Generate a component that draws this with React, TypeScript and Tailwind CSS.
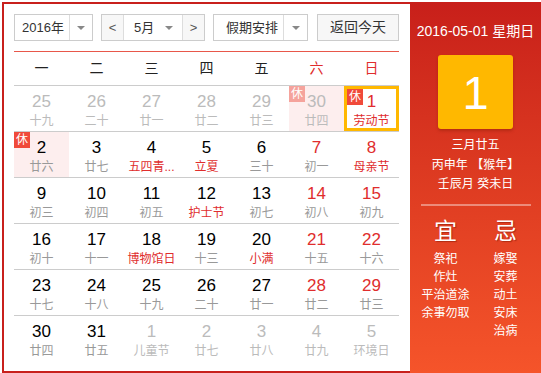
import React from 'react'

type Day = {
  n: number
  sub: string
  other?: boolean
  weekend?: boolean
  fest?: boolean
  rest?: boolean
  today?: boolean
}

const weeks: Day[][] = [
  [
    { n: 25, sub: '十九', other: true },
    { n: 26, sub: '二十', other: true },
    { n: 27, sub: '廿一', other: true },
    { n: 28, sub: '廿二', other: true },
    { n: 29, sub: '廿三', other: true },
    { n: 30, sub: '廿四', other: true, rest: true },
    { n: 1, sub: '劳动节', weekend: true, fest: true, rest: true, today: true },
  ],
  [
    { n: 2, sub: '廿六', rest: true },
    { n: 3, sub: '廿七' },
    { n: 4, sub: '五四青...', fest: true },
    { n: 5, sub: '立夏', fest: true },
    { n: 6, sub: '三十' },
    { n: 7, sub: '初一', weekend: true },
    { n: 8, sub: '母亲节', weekend: true, fest: true },
  ],
  [
    { n: 9, sub: '初三' },
    { n: 10, sub: '初四' },
    { n: 11, sub: '初五' },
    { n: 12, sub: '护士节', fest: true },
    { n: 13, sub: '初七' },
    { n: 14, sub: '初八', weekend: true },
    { n: 15, sub: '初九', weekend: true },
  ],
  [
    { n: 16, sub: '初十' },
    { n: 17, sub: '十一' },
    { n: 18, sub: '博物馆日', fest: true },
    { n: 19, sub: '十三' },
    { n: 20, sub: '小满', fest: true },
    { n: 21, sub: '十五', weekend: true },
    { n: 22, sub: '十六', weekend: true },
  ],
  [
    { n: 23, sub: '十七' },
    { n: 24, sub: '十八' },
    { n: 25, sub: '十九' },
    { n: 26, sub: '二十' },
    { n: 27, sub: '廿一' },
    { n: 28, sub: '廿二', weekend: true },
    { n: 29, sub: '廿三', weekend: true },
  ],
  [
    { n: 30, sub: '廿四' },
    { n: 31, sub: '廿五' },
    { n: 1, sub: '儿童节', other: true },
    { n: 2, sub: '廿七', other: true },
    { n: 3, sub: '廿八', other: true },
    { n: 4, sub: '廿九', other: true },
    { n: 5, sub: '环境日', other: true },
  ],
]

const yi = ['祭祀', '作灶', '平治道涂', '余事勿取']
const ji = ['嫁娶', '安葬', '动土', '安床', '治病']

function Caret() {
  return <span className="w-0 h-0 border-x-[4px] border-x-transparent border-t-[4px] border-t-[#888]" />
}

function DayCell({ d }: { d: Day }) {
  const numColor = d.other ? 'text-[#bbb]' : d.weekend ? 'text-[#e02d2d]' : 'text-black'
  const subColor = d.other ? 'text-[#bbb]' : d.fest ? 'text-[#e02d2d]' : 'text-[#999]'
  const bg = d.rest && !d.today ? 'bg-[#fdeeee]' : ''
  const frame = d.today ? 'border-[3px] border-[#ffb800]' : ''
  return (
    <div className={`relative h-[45px] flex flex-col items-center ${bg} ${frame} ${d.today ? 'pt-[3px]' : 'pt-[6px]'}`}>
      {d.rest && (
        <span
          className={`absolute left-0 top-0 w-[16px] h-[16px] flex items-center justify-center text-[12px] leading-none text-white ${
            d.other ? 'bg-[#f5a39c]' : 'bg-[#f04a3a]'
          } ${d.today ? '-left-[3px] -top-[3px]' : ''}`}
        >
          休
        </span>
      )}
      <span className={`text-[17px] leading-[20px] ${numColor}`}>{d.n}</span>
      <span className={`text-[12px] leading-[16px] mt-[1px] whitespace-nowrap ${subColor}`}>{d.sub}</span>
    </div>
  )
}

export default function App() {
  return (
    <div
      className="w-[541px] h-[373px] bg-white pl-[2px] pt-[2px]"
      style={{ fontFamily: '"Liberation Sans", Arial, "Noto Sans CJK SC", sans-serif' }}
    >
      <div className="w-[539px] h-[371px] border-2 border-[#c8201c] flex">
        {/* calendar side */}
        <div className="w-[406px] pl-[10px] pt-[10px]">
          <div className="w-[385px] flex items-center h-[27px] text-[13px] text-[#333]">
            <div className="w-[79px] h-[27px] border border-[#ccc] flex items-center">
              <span className="w-[54px] pl-[7px]">2016年</span>
              <span className="h-full border-l border-[#ddd] flex-1 flex items-center justify-center">
                <Caret />
              </span>
            </div>
            <div className="ml-[8px] w-[104px] h-[27px] border border-[#ccc] flex items-center">
              <span className="w-[21px] h-full bg-[#f7f7f7] flex items-center justify-center text-[#555]">&lt;</span>
              <span className="h-full flex-1 border-x border-[#ddd] flex items-center pl-[10px] pr-[9px] justify-between">
                5月
                <Caret />
              </span>
              <span className="w-[21px] h-full bg-[#f7f7f7] flex items-center justify-center text-[#555]">&gt;</span>
            </div>
            <div className="ml-[8px] w-[95px] h-[27px] border border-[#ccc] flex items-center">
              <span className="w-[69px] pl-[12px] whitespace-nowrap">假期安排</span>
              <span className="h-full border-l border-[#ddd] flex-1 flex items-center justify-center">
                <Caret />
              </span>
            </div>
            <div className="ml-auto w-[82px] h-[27px] border border-[#ccc] bg-[#f7f7f7] flex items-center justify-center text-[14px]">
              返回今天
            </div>
          </div>

          <div className="w-[385px] mt-[10px] border-t border-[#e8574a]" />

          <div className="w-[385px] grid grid-cols-7 h-[34px] items-center border-b border-[#ccc] text-[14px]">
            {['一', '二', '三', '四', '五', '六', '日'].map((w, i) => (
              <span key={w} className={`text-center ${i > 4 ? 'text-[#e02d2d]' : 'text-[#222]'}`}>
                {w}
              </span>
            ))}
          </div>

          <div className="w-[385px]">
            {weeks.map((row, r) => (
              <div key={r} className={`grid grid-cols-7 ${r < 5 ? 'border-b border-[#ccc]' : ''}`}>
                {row.map((d, i) => (
                  <DayCell key={i} d={d} />
                ))}
              </div>
            ))}
          </div>
        </div>

        {/* detail side */}
        <div className="flex-1 -mt-[2px] -mr-[2px] -mb-[2px] bg-gradient-to-b from-[#c81f1a] to-[#f5542a] text-white flex flex-col items-center">
          <div className="mt-[19px] text-[14px] leading-[20px]">2016-05-01 星期日</div>
          <div className="mt-[14px] w-[75px] h-[74px] rounded-[3px] bg-[#ffb800] shadow-[0_2px_3px_rgba(120,30,0,0.35)] flex items-center justify-center text-[47px] leading-none">
            1
          </div>
          <div className="mt-[7px] text-[12px] leading-[19.5px] text-center">
            <div>三月廿五</div>
            <div>丙申年 【猴年】</div>
            <div>壬辰月 癸未日</div>
          </div>
          <div className="mt-[9px] w-[110px] border-t-2 border-white/40" />
          <div className="mt-[10px] w-[120px] flex justify-between">
            <div className="w-[60px] flex flex-col items-center">
              <span className="text-[23px] leading-[30px] [text-shadow:1px_1px_1px_rgba(120,20,0,0.5)]">宜</span>
              <div className="mt-[4px] text-[12px] leading-[18px] text-center">
                {yi.map(t => (
                  <div key={t}>{t}</div>
                ))}
              </div>
            </div>
            <div className="w-[60px] flex flex-col items-center">
              <span className="text-[23px] leading-[30px] [text-shadow:1px_1px_1px_rgba(120,20,0,0.5)]">忌</span>
              <div className="mt-[4px] text-[12px] leading-[18px] text-center">
                {ji.map(t => (
                  <div key={t}>{t}</div>
                ))}
              </div>
            </div>
          </div>
        </div>
      </div>
    </div>
  )
}
